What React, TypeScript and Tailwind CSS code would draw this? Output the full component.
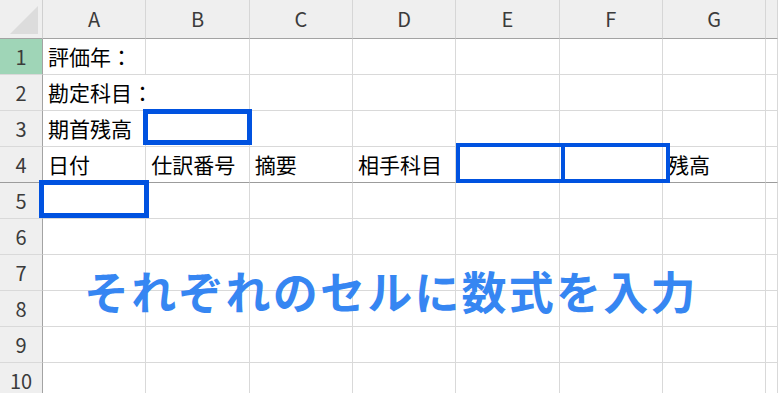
import React from 'react';

const COLS = ['A', 'B', 'C', 'D', 'E', 'F', 'G', ''];

// cell text keyed by row then column index
const CELLS: Record<number, Record<number, string>> = {
  1: { 0: '評価年：' },
  2: { 0: '勘定科目：' },
  3: { 0: '期首残高' },
  4: { 0: '日付', 1: '仕訳番号', 2: '摘要', 3: '相手科目', 6: '残高' },
};

// blue outlines marking the input cells, with how far they bleed past the gridlines
const MARKS: Record<string, string> = {
  '3-1': '-top-[2px] -left-[3px] -right-[3px] bottom-[1px] border-[5px]',
  '5-0': '-top-[3px] -left-[4px] -right-[4px] bottom-0 border-[5px]',
  '4-4': '-top-[4px] left-0 -right-[6px] -bottom-[1px] border-4',
  '4-5': '-top-[4px] left-[1px] -right-[8px] -bottom-[1px] border-4',
};

const ROWS = [1, 2, 3, 4, 5, 6, 7, 8, 9, 10];

function Cell({ row, col }: { row: number; col: number }) {
  const text = CELLS[row]?.[col] ?? '';
  const mark = MARKS[`${row}-${col}`];
  // text spilling out of A2 hides the gridline on its right
  const noRight = row === 2 && col === 0;
  const frozen = row === 4;
  return (
    <div
      className={
        'relative flex items-center pl-[5px] whitespace-nowrap text-[21px] text-black ' +
        (noRight ? '' : 'border-r border-[#d9d9d9] ') +
        (frozen ? 'border-b border-b-[#9c9c9c]' : 'border-b border-b-[#d9d9d9]')
      }
    >
      {text}
      {mark && <div className={'absolute z-10 border-[#0052e0] ' + mark} />}
    </div>
  );
}

export default function App() {
  return (
    <div
      className="relative w-[778px] h-[393px] overflow-hidden bg-white"
      style={{ fontFamily: '"Noto Sans CJK JP", "Noto Sans", sans-serif' }}
    >
      <div className="grid grid-cols-[43px_repeat(7,103.33px)_1fr] grid-rows-[39px_repeat(10,36px)]">
        {/* corner */}
        <div className="flex items-end justify-end p-[4px] bg-[#efefef] border-r border-[#d0d0d0] border-b border-b-[#a3a3a3]">
          <div className="w-0 h-0 border-l-[28px] border-l-transparent border-b-[28px] border-b-[#dcdcdc]" />
        </div>
        {COLS.map((c, i) => (
          <div
            key={i}
            className="flex items-center justify-center bg-[#efefef] border-r border-[#d6d6d6] border-b border-b-[#a3a3a3] text-[20px] text-[#3b3b3b]"
          >
            {c}
          </div>
        ))}

        {ROWS.map((r) => (
          <React.Fragment key={r}>
            <div
              className={
                'flex items-center justify-center border-r border-[#a3a3a3] text-[20px] text-[#3b3b3b] ' +
                (r === 1 ? 'bg-[#9fd5b7] ' : 'bg-[#efefef] ') +
                (r === 4 ? 'border-b border-b-[#9c9c9c]' : 'border-b border-b-[#d9d9d9]')
              }
            >
              {r}
            </div>
            {COLS.map((_, ci) => (
              <Cell key={ci} row={r} col={ci} />
            ))}
          </React.Fragment>
        ))}
      </div>

      <div className="absolute z-20 left-[84px] top-[268px] text-[45px] font-bold tracking-[2.2px] leading-none text-[#3686f2] whitespace-nowrap">
        それぞれのセルに数式を入力
      </div>
    </div>
  );
}
